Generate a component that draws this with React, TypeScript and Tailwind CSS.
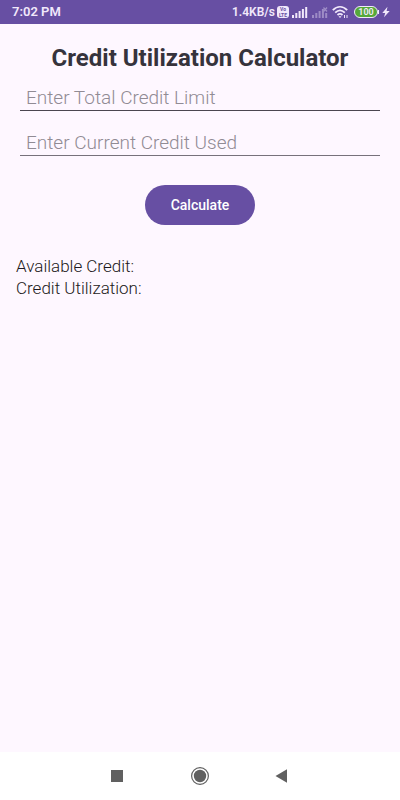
import { useState } from "react";
import type { FormEvent } from "react";

function SignalIcon({ off = false }: { off?: boolean }) {
    return (
        <svg viewBox="0 0 16 12" className="h-3 w-4" fill="currentColor" opacity={off ? 0.4 : 1}>
            <rect x="0" y="9" width="2" height="3" />
            <rect x="3.300" y="7" width="2" height="5" />
            <rect x="6.600" y="5" width="2" height="7" />
            {off ? (
                <>
                    <path d="M9.900 3h2v9h-2zM13.200 7h2v5h-2z" />
                    <path d="M11.500 1.500l3.500 4M15 1.500l-3.500 4" fill="none" stroke="currentColor" strokeWidth="1.3" />
                </>
            ) : (
                <>
                    <rect x="9.900" y="3" width="2" height="9" />
                    <rect x="13.200" y="1" width="2" height="11" />
                </>
            )}
        </svg>
    );
}

function WifiIcon() {
    return (
        <svg viewBox="0 0 17 14" className="h-[14px] w-[17px]" fill="none" stroke="currentColor" strokeWidth="1.8">
            <path d="M.8 5.2C5.2.8 10.8.8 15.2 5.2" />
            <path d="M3.2 7.7c3-2.9 6.6-2.9 9.6 0" />
            <path d="M5.5 10c1.6-1.5 3.4-1.5 5 0" />
            <path d="M6.5 11.2h3L8 13z" fill="currentColor" stroke="none" />
            <path d="M12.5 10v3M15 10v3" strokeWidth="1" />
        </svg>
    );
}

function StatusBar() {
    return (
        <header className="flex h-6 items-center justify-between bg-[#674fa3] pr-[10px] pl-3 text-[#f1e8fb]">
            <span className="text-[13px] leading-6 font-semibold">7:02 PM</span>
            <div className="flex items-center">
                <span className="text-xs leading-6 font-semibold">1.4KB/s</span>
                <span className="ml-[2px] flex h-3 w-3 flex-col items-center justify-center rounded-[3px] bg-[#f1e8fb] text-[5px] leading-[6px] font-bold text-[#674fa3]">
                    <span>Vo</span>
                    <span>LTE</span>
                </span>
                <span className="ml-[3px]"><SignalIcon /></span>
                <span className="ml-1"><SignalIcon off /></span>
                <span className="ml-1"><WifiIcon /></span>
                <span className="ml-[5px] flex h-3 w-6 items-center justify-center rounded-full border border-[#f1e8fb] bg-[#55a83a] text-[9px] leading-none font-semibold">
                    100
                </span>
                <span className="h-1 w-px bg-[#f1e8fb]" />
                <svg viewBox="0 0 8 12" className="ml-[3px] h-3 w-2" fill="currentColor">
                    <path d="M5.5.8.3 7h2.9L2 11.3 7.7 5H4.6z" />
                </svg>
            </div>
        </header>
    );
}

function NavBar() {
    return (
        <nav className="flex h-12 items-center justify-center gap-[58px] bg-white text-[#606060]">
            <button type="button" aria-label="Recent apps">
                <svg viewBox="0 0 24 24" className="size-6">
                    <rect x="5" y="6" width="12" height="12" fill="currentColor" />
                </svg>
            </button>
            <button type="button" aria-label="Home">
                <svg viewBox="0 0 24 24" className="size-6">
                    <circle cx="12" cy="12" r="8.4" fill="none" stroke="currentColor" strokeWidth="1.2" />
                    <circle cx="12" cy="12" r="6.2" fill="currentColor" />
                </svg>
            </button>
            <button type="button" aria-label="Back">
                <svg viewBox="0 0 24 24" className="size-6">
                    <path d="M5.5 12 17 5.2v13.6z" fill="currentColor" />
                </svg>
            </button>
        </nav>
    );
}

export default function App() {
    const [limit, setLimit] = useState("");
    const [used, setUsed] = useState("");
    const [available, setAvailable] = useState("");
    const [utilization, setUtilization] = useState("");

    const calculate = (e: FormEvent) => {
        e.preventDefault();
        const total = Number(limit);
        const spent = Number(used);
        if (!limit || !used || !(total > 0) || Number.isNaN(spent)) {
            return;
        }
        setAvailable((total - spent).toFixed(2));
        setUtilization(`${((spent / total) * 100).toFixed(2)}%`);
    };

    return (
        <div className="flex min-h-screen flex-col bg-[#fef7ff] font-['Roboto',sans-serif]">
            <StatusBar />

            <main className="flex-1 px-4 pt-4">
                <h1 className="text-center text-2xl leading-9 font-bold text-[#36333c]">
                    Credit Utilization Calculator
                </h1>

                <form onSubmit={calculate} className="flex flex-col px-1">
                    <input
                        type="text"
                        inputMode="decimal"
                        aria-label="Total credit limit"
                        placeholder="Enter Total Credit Limit"
                        value={limit}
                        onChange={(e) => setLimit(e.target.value)}
                        className="h-[35px] w-full border-b border-[#4b4650] px-[6px] pt-2 text-[19px] leading-[26px] font-light text-[#36333c] outline-none placeholder:text-[#918b94]"
                    />
                    <input
                        type="text"
                        inputMode="decimal"
                        aria-label="Current credit used"
                        placeholder="Enter Current Credit Used"
                        value={used}
                        onChange={(e) => setUsed(e.target.value)}
                        className="mt-[10px] h-[35px] w-full border-b border-[#77717b] px-[6px] pt-2 text-[19px] leading-[26px] font-light text-[#36333c] outline-none placeholder:text-[#918b94]"
                    />
                    <button
                        type="submit"
                        className="mt-[29px] h-10 w-[110px] self-center rounded-full bg-[#674fa3] text-sm font-medium text-white"
                    >
                        Calculate
                    </button>
                </form>

                <div className="mt-[30px] text-[17px] leading-[22px] font-light text-[#1c1920]">
                    <p>Available Credit: {available}</p>
                    <p>Credit Utilization: {utilization}</p>
                </div>
            </main>

            <NavBar />
        </div>
    );
}
